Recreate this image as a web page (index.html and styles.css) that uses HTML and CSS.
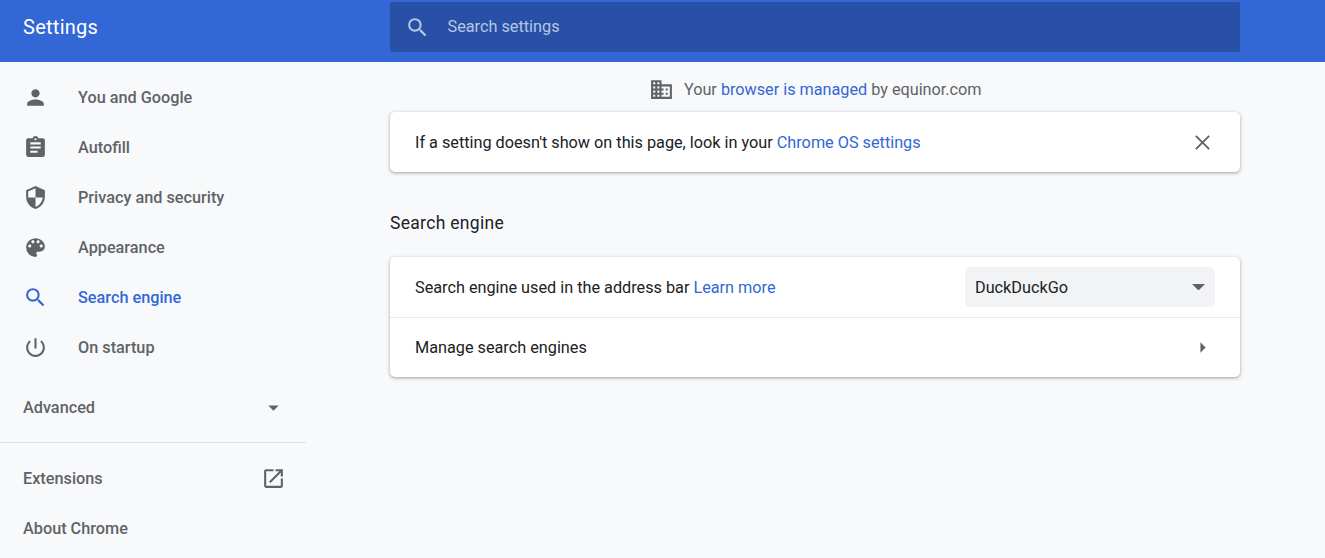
FILE: index.html
```
<!DOCTYPE html>
<html lang="en">
<head>
<meta charset="utf-8">
<title>Settings</title>
<link rel="stylesheet" href="styles.css">
</head>
<body>
<header class="toolbar">
  <h1 class="title">Settings</h1>
  <div class="search">
    <svg class="icon" viewBox="0 0 24 24"><path d="M15.5 14h-.79l-.28-.27A6.471 6.471 0 0 0 16 9.5 6.5 6.5 0 1 0 9.5 16c1.61 0 3.09-.59 4.23-1.57l.27.28v.79l5 4.99L20.49 19l-4.99-5zm-6 0C7.01 14 5 11.99 5 9.5S7.01 5 9.5 5 14 7.01 14 9.5 11.99 14 9.5 14z"/></svg>
    <span class="search-text">Search settings</span>
  </div>
</header>
<div class="layout">
  <nav class="sidebar">
    <a class="item"><svg class="icon" viewBox="0 0 24 24"><path d="M12 12c2.21 0 4-1.79 4-4s-1.79-4-4-4-4 1.79-4 4 1.79 4 4 4zm0 2c-2.67 0-8 1.34-8 4v2h16v-2c0-2.66-5.33-4-8-4z"/></svg><span>You and Google</span></a>
    <a class="item"><svg class="icon" viewBox="0 0 24 24"><path d="M19 3h-4.18C14.4 1.84 13.3 1 12 1c-1.3 0-2.4.84-2.82 2H5c-1.1 0-2 .9-2 2v14c0 1.1.9 2 2 2h14c1.1 0 2-.9 2-2V5c0-1.1-.9-2-2-2zm-7 0c.55 0 1 .45 1 1s-.45 1-1 1-1-.45-1-1 .45-1 1-1zm2 14H7v-2h7v2zm3-4H7v-2h10v2zm0-4H7V7h10v2z"/></svg><span>Autofill</span></a>
    <a class="item"><svg class="icon" viewBox="0 0 24 24"><path d="M12 1L3 5v6c0 5.55 3.84 10.74 9 12 5.16-1.26 9-6.45 9-12V5l-9-4zm0 10.99h7c-.53 4.12-3.28 7.79-7 8.94V12H5V6.3l7-3.11v8.8z"/></svg><span>Privacy and security</span></a>
    <a class="item"><svg class="icon" viewBox="0 0 24 24"><path d="M12 3a9 9 0 0 0 0 18c.83 0 1.5-.67 1.5-1.5 0-.39-.15-.74-.39-1.01-.23-.26-.38-.61-.38-.99 0-.83.67-1.5 1.5-1.5H16c2.76 0 5-2.24 5-5 0-4.42-4.03-8-9-8zm-5.5 9c-.83 0-1.5-.67-1.5-1.5S5.67 9 6.5 9 8 9.67 8 10.5 7.33 12 6.5 12zm3-4C8.67 8 8 7.33 8 6.5S8.67 5 9.5 5s1.5.67 1.5 1.5S10.33 8 9.5 8zm5 0c-.83 0-1.5-.67-1.5-1.5S13.67 5 14.5 5s1.5.67 1.5 1.5S15.33 8 14.5 8zm3 4c-.83 0-1.5-.67-1.5-1.5S16.67 9 17.5 9s1.5.67 1.5 1.5-.67 1.5-1.5 1.5z"/></svg><span>Appearance</span></a>
    <a class="item selected"><svg class="icon" viewBox="0 0 24 24"><path d="M15.5 14h-.79l-.28-.27A6.471 6.471 0 0 0 16 9.5 6.5 6.5 0 1 0 9.5 16c1.61 0 3.09-.59 4.23-1.57l.27.28v.79l5 4.99L20.49 19l-4.99-5zm-6 0C7.01 14 5 11.99 5 9.5S7.01 5 9.5 5 14 7.01 14 9.5 11.99 14 9.5 14z"/></svg><span>Search engine</span></a>
    <a class="item"><svg class="icon" viewBox="0 0 24 24"><path d="M13 3h-2v10h2V3zm4.83 2.17l-1.42 1.42C17.99 7.86 19 9.81 19 12c0 3.87-3.13 7-7 7s-7-3.13-7-7c0-2.19 1.01-4.14 2.58-5.42L6.17 5.17C4.23 6.82 3 9.26 3 12c0 4.97 4.03 9 9 9s9-4.03 9-9c0-2.74-1.23-5.18-3.17-6.83z"/></svg><span>On startup</span></a>
    <a class="item advanced"><span>Advanced</span><svg class="icon" viewBox="0 0 24 24"><path d="M7 10l5 5 5-5z"/></svg></a>
    <hr class="separator">
    <a class="item wide"><span>Extensions</span><svg class="icon" viewBox="0 0 24 24"><path d="M19 19H5V5h7V3H5c-1.11 0-2 .9-2 2v14c0 1.1.89 2 2 2h14c1.1 0 2-.9 2-2v-7h-2v7zM14 3v2h3.59l-9.83 9.83 1.41 1.41L19 6.41V10h2V3h-7z"/></svg></a>
    <a class="item wide"><span>About Chrome</span></a>
  </nav>
  <main class="main">
    <div class="managed">
      <svg class="icon" viewBox="0 0 24 24"><path d="M12 7V3H2v18h20V7H12zM6 19H4v-2h2v2zm0-4H4v-2h2v2zm0-4H4V9h2v2zm0-4H4V5h2v2zm4 12H8v-2h2v2zm0-4H8v-2h2v2zm0-4H8V9h2v2zm0-4H8V5h2v2zm10 12h-8v-2h2v-2h-2v-2h2v-2h-2V9h8v10zm-2-8h-2v2h2v-2zm0 4h-2v2h2v-2z"/></svg>
      <span>Your <a class="link">browser is managed</a> by equinor.com</span>
    </div>
    <section class="card">
      <div class="row">
        <span>If a setting doesn't show on this page, look in your <a class="link">Chrome OS settings</a></span>
        <svg class="icon close" viewBox="0 0 24 24"><path d="M5.6 5.6l12.8 12.8M18.4 5.6L5.6 18.4"/></svg>
      </div>
    </section>
    <h2 class="heading">Search engine</h2>
    <section class="card">
      <div class="row">
        <span>Search engine used in the address bar <a class="link">Learn more</a></span>
        <div class="select"><span>DuckDuckGo</span><svg class="caret" viewBox="0 0 12 6"><path d="M0 0h12L6 6z"/></svg></div>
      </div>
      <div class="row divided">
        <span>Manage search engines</span>
        <svg class="icon" viewBox="0 0 24 24"><path d="M10 7l5 5-5 5z"/></svg>
      </div>
    </section>
  </main>
</div>
</body>
</html>
```
FILE: styles.css
```
* { box-sizing: border-box; }
body {
  margin: 0;
  height: 558px;
  overflow: hidden;
  background: #f8f9fb;
  color: #202124;
  font: 16.25px/25px Roboto, sans-serif;
}
.icon { width: 25px; height: 25px; flex: none; fill: #5f6368; }
.close { fill: none; stroke: #5f6368; stroke-width: 1.8; }
.link { color: #3367d6; }
.toolbar {
  display: flex;
  height: 62px;
  padding: 2px 85px 10px 23px;
  background: #3367d6;
  color: #fff;
}
.title {
  width: 367px;
  margin: 0;
  font-size: 20px;
  font-weight: 400;
  line-height: 50px;
  letter-spacing: .27px;
}
.search {
  flex: 1;
  display: flex;
  align-items: center;
  padding-left: 15px;
  gap: 17.5px;
  border-radius: 2.5px;
  background: #2850a7;
  color: #b7c6e4;
}
.search .icon { fill: #b7c6e4; }
.search-text { padding-bottom: 2px; }
.layout { display: flex; }
.sidebar {
  width: 390px;
  padding-top: 10px;
  color: #5f6368;
  font-weight: 500;
}
.item {
  display: flex;
  align-items: center;
  width: 286px;
  height: 50px;
  padding: 1px 0 0 23px;
  gap: 30px;
}
.selected { color: #3367d6; }
.selected .icon { fill: #3367d6; }
.advanced, .wide { justify-content: space-between; }
.advanced { margin-top: 10px; }
.separator {
  width: 306px;
  height: 1px;
  margin: 10px 0;
  border: 0;
  background: #e0e1e3;
}
.main { width: 850px; }
.managed {
  display: flex;
  justify-content: center;
  align-items: center;
  height: 50px;
  padding: 5px 0 0 1px;
  gap: 9.5px;
  color: #5f6368;
  letter-spacing: -.02px;
}
.card {
  border-radius: 5px;
  background: #fff;
  box-shadow: 0 1px 2.5px rgba(60, 64, 67, .3), 0 1px 3.75px 1px rgba(60, 64, 67, .15);
}
.row {
  display: flex;
  align-items: center;
  justify-content: space-between;
  height: 60px;
  padding: 0 25px;
  letter-spacing: -.008px;
}
.divided { border-top: 1px solid #e8e9ea; }
.heading {
  margin: 0;
  padding: 39px 0 21px;
  font-size: 17.5px;
  font-weight: 400;
  line-height: 25px;
  letter-spacing: .31px;
}
.select {
  display: flex;
  align-items: center;
  justify-content: space-between;
  width: 250px;
  height: 40px;
  padding: 0 10px;
  border-radius: 5px;
  background: #f1f3f4;
}
.caret { width: 13px; height: 6.5px; fill: #5f6368; }
```
